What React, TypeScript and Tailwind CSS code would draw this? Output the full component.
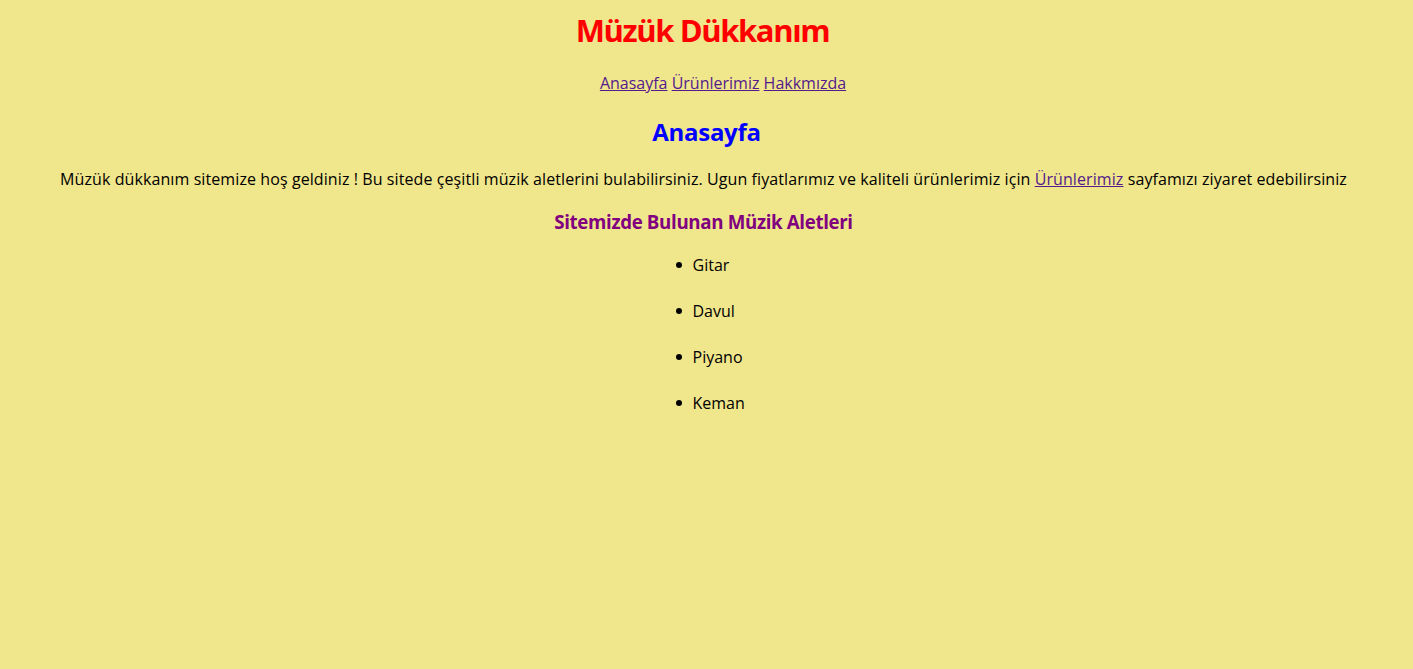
import React from "react";

const font = { fontFamily: '"Comic Sans MS", "Open Sans", "DejaVu Sans", sans-serif' };

export default function App() {
  return (
    <div className="min-h-[669px] w-full bg-[#f0e68c] text-black" style={font}>
      <div className="flex flex-col items-center pt-[10px] text-center">
        <h1 className="pr-[8px] text-[31px] leading-[40px] font-bold tracking-[-1.4px] text-[#ff0000]">Müzük Dükkanım</h1>
        <nav className="mt-[21px] pl-[33px] text-[16px] leading-[24px] text-[#551a8b]">
          <a href="#" className="underline">Anasayfa</a>{" "}
          <a href="#" className="underline">Ürünlerimiz</a>{" "}
          <a href="#" className="underline">Hakkmızda</a>
        </nav>
        <h2 className="mt-[21px] text-[24px] leading-[32px] font-bold tracking-[-0.3px] text-[#0000ff]">Anasayfa</h2>
        <p className="mt-[19px] pr-[6px] text-[16px] leading-[24px] tracking-[0.09px]">
          Müzük dükkanım sitemize hoş geldiniz ! Bu sitede çeşitli müzik aletlerini bulabilirsiniz. Ugun fiyatlarımız ve kaliteli ürünlerimiz için{" "}
          <a href="#" className="text-[#551a8b] underline">Ürünlerimiz</a> sayfamızı ziyaret edebilirsiniz
        </p>
        <h3 className="mt-[19px] pr-[6px] text-[18.72px] leading-[24px] font-bold tracking-[-0.35px] text-[#800080]">Sitemizde Bulunan Müzik Aletleri</h3>
        <ul className="mt-[19px] flex w-[48px] translate-x-[-7px] flex-col gap-[22px] self-center text-left text-[16px] leading-[24px]">
          {["Gitar", "Davul", "Piyano", "Keman"].map((t) => (
            <li key={t} className="flex items-center whitespace-nowrap">
              <span className="mr-[11px] inline-block h-[6px] w-[6px] shrink-0 rounded-full bg-black" />
              {t}
            </li>
          ))}
        </ul>
      </div>
    </div>
  );
}
